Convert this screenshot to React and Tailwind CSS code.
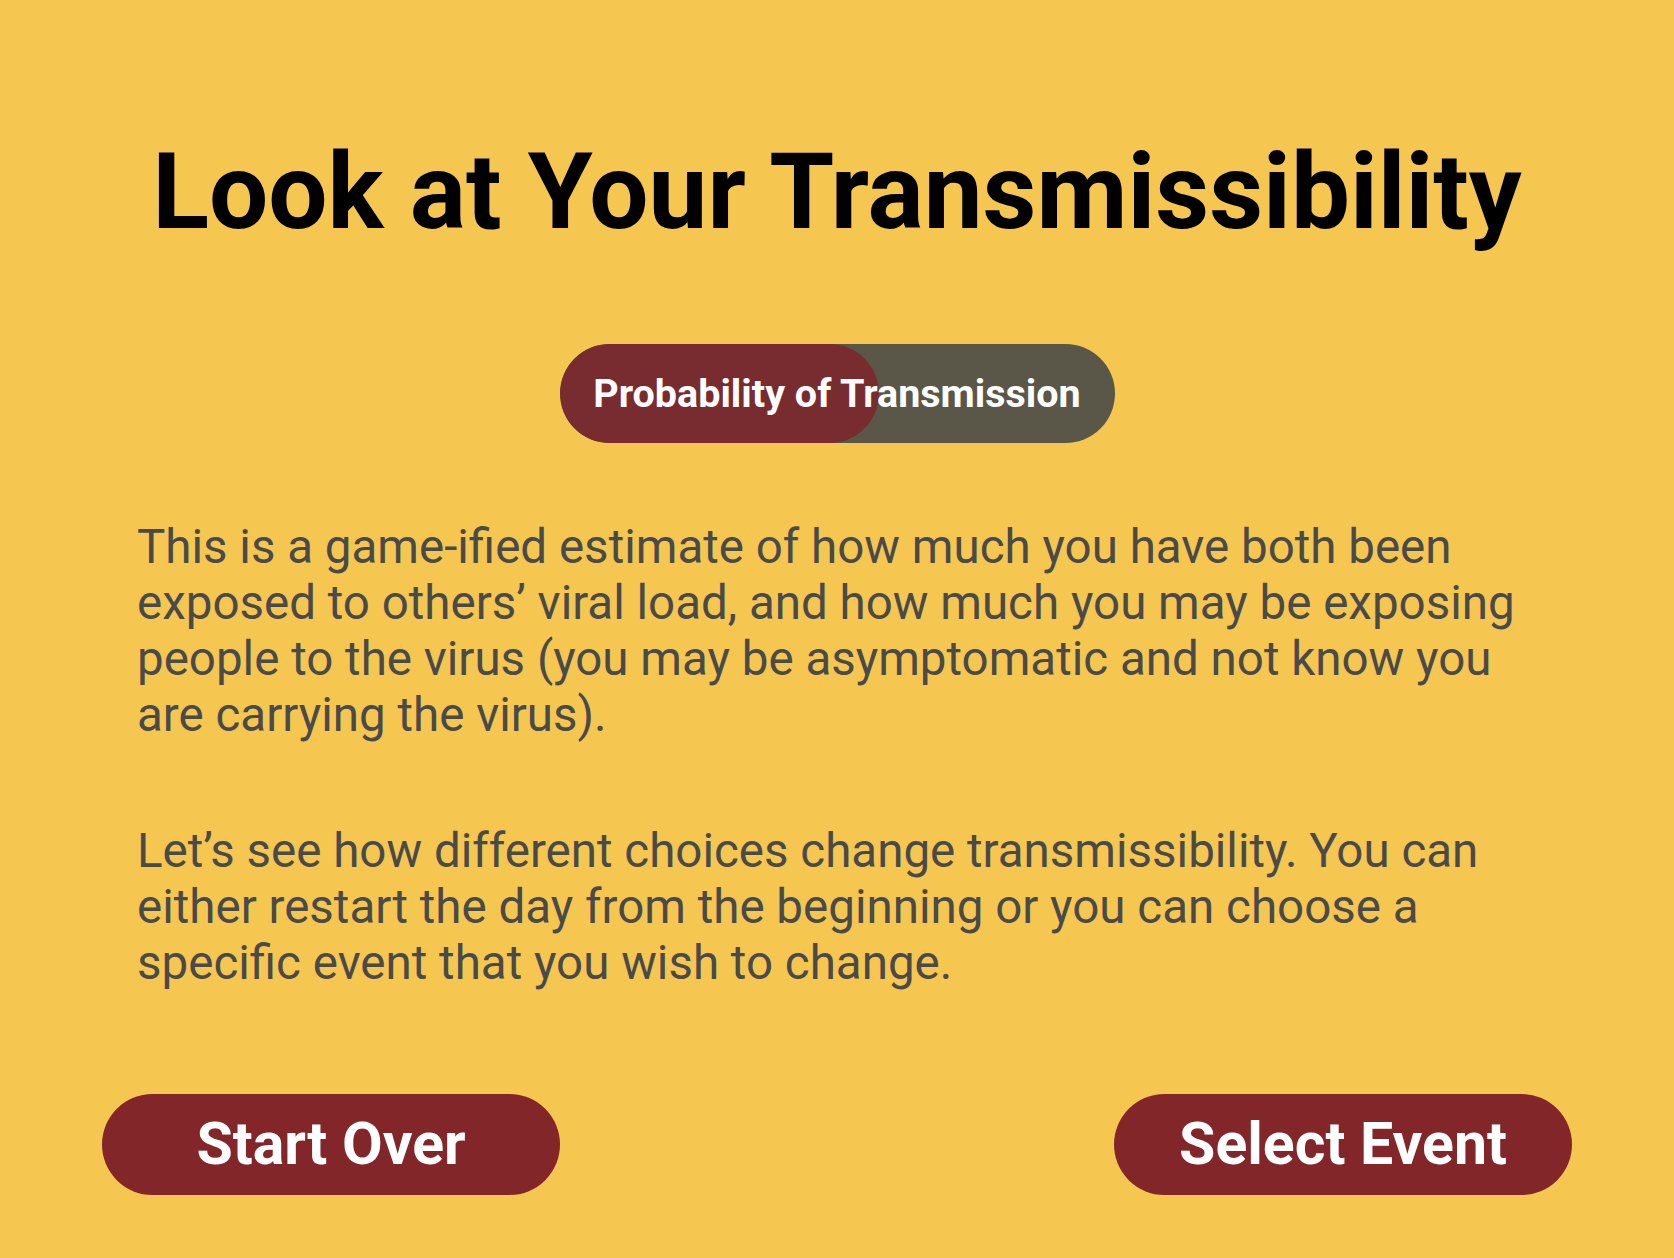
import React from 'react';

const App = () => {
    return (
        <div className="min-h-screen bg-[#f5c650] flex flex-col items-center" style={{ fontFamily: 'Roboto, "Liberation Sans", sans-serif' }}>
            {/* Title */}
            <h1 className="pt-[140px] text-[105px] leading-[105px] font-bold text-black">
                Look at Your Transmissibility
            </h1>

            {/* Progress pill */}
            <div className="relative mt-[99px] w-[555px] h-[99px] shrink-0 rounded-full bg-[#5a5748] overflow-hidden flex items-center justify-center">
                <div className="absolute left-0 top-0 h-full w-[319px] rounded-full bg-[#782c30]"></div>
                <span className="relative text-white font-bold text-[39.5px] whitespace-nowrap">Probability of Transmission</span>
            </div>

            {/* Copy */}
            <div className="w-[1400px] mt-[76px] text-[47.5px] leading-[56px] text-[#4a4a4a]">
                <p>
                    This is a game-ified estimate of how much you have both been exposed to others’ viral load, and how much you may be exposing people to the virus (you may be asymptomatic and not know you are carrying the virus).
                </p>
                <p className="mt-[80px]">
                    Let’s see how different choices change transmissibility. You can either restart the day from the beginning or you can choose a specific event that you wish to change.
                </p>
            </div>

            {/* Buttons */}
            <div className="w-full px-[102px] mt-[103px] flex justify-between">
                <button className="w-[458px] h-[101px] rounded-full bg-[#832629] text-white font-bold text-[59px]">
                    Start Over
                </button>
                <button className="w-[458px] h-[101px] rounded-full bg-[#832629] text-white font-bold text-[59px]">
                    Select Event
                </button>
            </div>
        </div>
    );
};

export default App;
